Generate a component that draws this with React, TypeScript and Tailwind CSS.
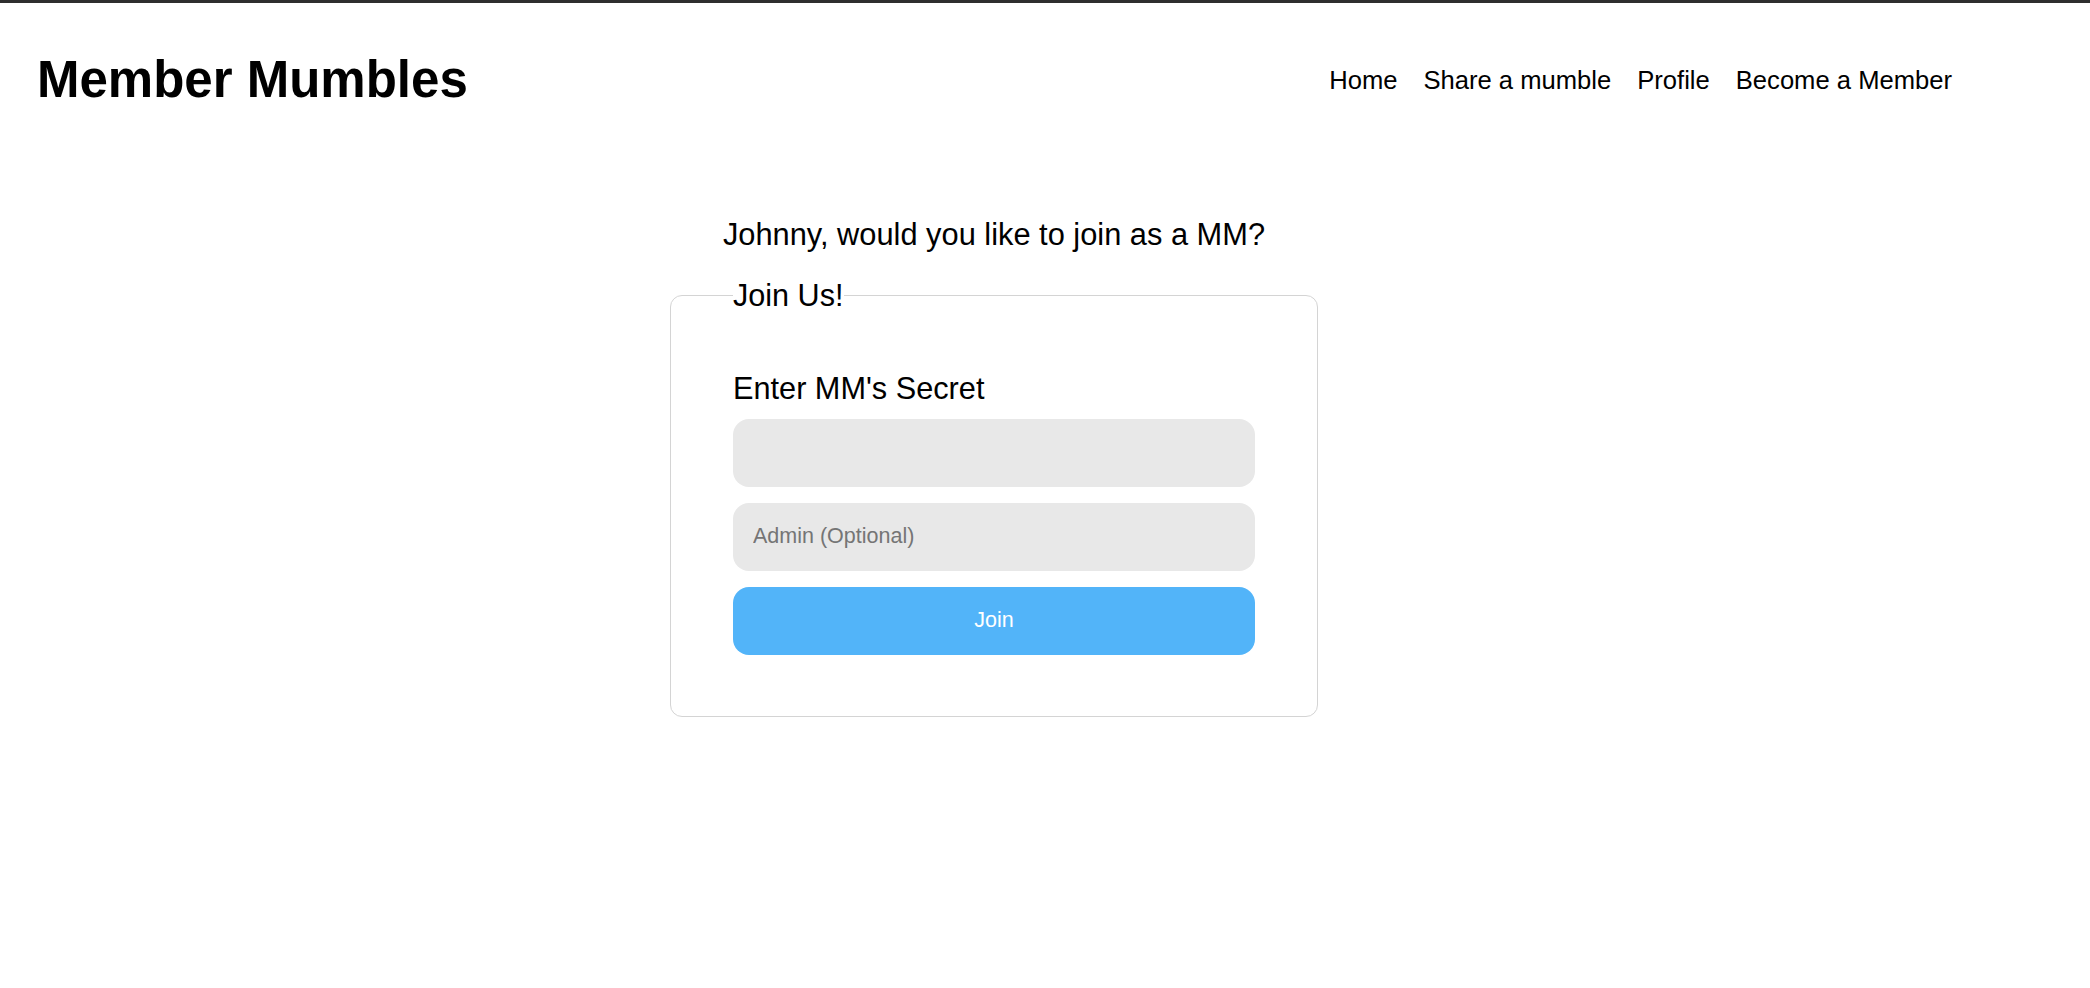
import React from "react";

export default function App() {
  return (
    <div className="min-h-screen bg-white text-black font-['Liberation_Sans',Arial,sans-serif]">
      <div className="h-[3px] bg-[#2e2e2e]" />
      <header className="flex h-[154px] items-center justify-between pl-[37px] pr-[138px]">
        <h1 className="text-[51px] font-bold leading-[58px]">Member Mumbles</h1>
        <nav className="flex items-center gap-[26px] text-[25.6px] leading-[30px]">
          <a href="#">Home</a>
          <a href="#">Share a mumble</a>
          <a href="#">Profile</a>
          <a href="#">Become a Member</a>
        </nav>
      </header>
      <main className="flex flex-col items-center pt-[61px] pr-[102px]">
        <h2 className="text-[30.8px] leading-[34px]">Johnny, would you like to join as a MM?</h2>
        <form className="mt-[26px]" onSubmit={(e) => e.preventDefault()}>
          <fieldset className="w-[648px] rounded-xl border border-[#d4d4d4] px-[62px] pb-[61px]">
            <legend className="text-[30.6px] leading-[34px]">Join Us!</legend>
            <div className="flex flex-col pt-[60px]">
              <label htmlFor="secret" className="text-[30.7px] leading-[34px]">
                Enter MM's Secret
              </label>
              <input
                id="secret"
                type="password"
                className="mt-[13px] h-[68px] w-full rounded-2xl bg-[#e8e8e8] px-[20px] pb-[2px] text-[21.5px] outline-none"
              />
              <input
                type="text"
                placeholder="Admin (Optional)"
                className="mt-[16px] h-[68px] w-full rounded-2xl bg-[#e8e8e8] px-[20px] pb-[2px] text-[21.5px] outline-none placeholder:text-[#757575]"
              />
              <button
                type="submit"
                className="mt-[16px] h-[68px] w-full rounded-2xl bg-[#52b4f9] pb-[2px] text-[21.5px] text-white"
              >
                Join
              </button>
            </div>
          </fieldset>
        </form>
      </main>
    </div>
  );
}
